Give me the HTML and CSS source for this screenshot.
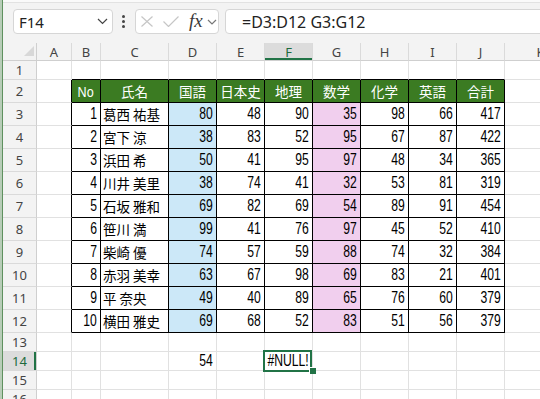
FILE: index.html
```html
<!DOCTYPE html>
<html lang="ja">
<head>
<meta charset="utf-8">
<link rel="stylesheet" href="styles.css">
</head>
<body>
<div class="app">
  <div class="topband"></div>
  <div class="fbar">
    <div class="box namebox"><span>F14</span><svg class="chev" width="11" height="7" viewBox="0 0 11 7"><path d="M1 1 L5.5 5.5 L10 1"/></svg></div>
    <div class="dots"><i></i><i></i><i></i></div>
    <div class="box fbtns">
      <svg class="xic" width="12" height="11" viewBox="0 0 12 11"><path d="M0.5 0.5 L11.5 10.5 M11.5 0.5 L0.5 10.5"/></svg>
      <svg class="ckic" width="16" height="11" viewBox="0 0 16 11"><path d="M0.5 5.5 L5.5 10.5 L15.5 0.5"/></svg>
      <span class="fx">fx</span>
      <svg class="chev2" width="10" height="6" viewBox="0 0 10 6"><path d="M1 1 L5 5 L9 1"/></svg>
    </div>
    <div class="box finput">=D3:D12 G3:G12</div>
  </div>
  <div class="sheet">
    <div class="row hdr">
      <div class="c ch corner"><i class="tri"></i></div>
      <div class="c ch">A</div><div class="c ch">B</div><div class="c ch">C</div><div class="c ch">D</div><div class="c ch">E</div><div class="c ch selc">F</div><div class="c ch">G</div><div class="c ch">H</div><div class="c ch">I</div><div class="c ch">J</div><div class="c ch">K</div>
    </div>
    <div class="row r19">
      <div class="c rh">1</div><div class="c"></div>
      <div class="c tt"></div><div class="c tt"></div><div class="c tt"></div><div class="c tt"></div><div class="c tt"></div><div class="c tt"></div><div class="c tt"></div><div class="c tt"></div><div class="c tt"></div>
      <div class="c"></div>
    </div>
    <div class="row r23">
      <div class="c rh">2</div><div class="c tl"></div>
      <div class="c t h"><span class="v">No</span></div><div class="c t h">氏名</div><div class="c t h">国語</div><div class="c t h">日本史</div><div class="c t h">地理</div><div class="c t h">数学</div><div class="c t h">化学</div><div class="c t h">英語</div><div class="c t h">合計</div>
      <div class="c"></div>
    </div>
    <div class="row r23">
      <div class="c rh">3</div><div class="c tl"></div>
      <div class="c t n"><span class="v">1</span></div><div class="c t s">葛西 祐基</div><div class="c t n b"><span class="v">80</span></div><div class="c t n"><span class="v">48</span></div><div class="c t n"><span class="v">90</span></div><div class="c t n p"><span class="v">35</span></div><div class="c t n"><span class="v">98</span></div><div class="c t n"><span class="v">66</span></div><div class="c t n"><span class="v">417</span></div>
      <div class="c"></div>
    </div>
    <div class="row r23">
      <div class="c rh">4</div><div class="c tl"></div>
      <div class="c t n"><span class="v">2</span></div><div class="c t s">宮下 涼</div><div class="c t n b"><span class="v">38</span></div><div class="c t n"><span class="v">83</span></div><div class="c t n"><span class="v">52</span></div><div class="c t n p"><span class="v">95</span></div><div class="c t n"><span class="v">67</span></div><div class="c t n"><span class="v">87</span></div><div class="c t n"><span class="v">422</span></div>
      <div class="c"></div>
    </div>
    <div class="row r23">
      <div class="c rh">5</div><div class="c tl"></div>
      <div class="c t n"><span class="v">3</span></div><div class="c t s">浜田 希</div><div class="c t n b"><span class="v">50</span></div><div class="c t n"><span class="v">41</span></div><div class="c t n"><span class="v">95</span></div><div class="c t n p"><span class="v">97</span></div><div class="c t n"><span class="v">48</span></div><div class="c t n"><span class="v">34</span></div><div class="c t n"><span class="v">365</span></div>
      <div class="c"></div>
    </div>
    <div class="row r23">
      <div class="c rh">6</div><div class="c tl"></div>
      <div class="c t n"><span class="v">4</span></div><div class="c t s">川井 美里</div><div class="c t n b"><span class="v">38</span></div><div class="c t n"><span class="v">74</span></div><div class="c t n"><span class="v">41</span></div><div class="c t n p"><span class="v">32</span></div><div class="c t n"><span class="v">53</span></div><div class="c t n"><span class="v">81</span></div><div class="c t n"><span class="v">319</span></div>
      <div class="c"></div>
    </div>
    <div class="row r23">
      <div class="c rh">7</div><div class="c tl"></div>
      <div class="c t n"><span class="v">5</span></div><div class="c t s">石坂 雅和</div><div class="c t n b"><span class="v">69</span></div><div class="c t n"><span class="v">82</span></div><div class="c t n"><span class="v">69</span></div><div class="c t n p"><span class="v">54</span></div><div class="c t n"><span class="v">89</span></div><div class="c t n"><span class="v">91</span></div><div class="c t n"><span class="v">454</span></div>
      <div class="c"></div>
    </div>
    <div class="row r23">
      <div class="c rh">8</div><div class="c tl"></div>
      <div class="c t n"><span class="v">6</span></div><div class="c t s">笹川 満</div><div class="c t n b"><span class="v">99</span></div><div class="c t n"><span class="v">41</span></div><div class="c t n"><span class="v">76</span></div><div class="c t n p"><span class="v">97</span></div><div class="c t n"><span class="v">45</span></div><div class="c t n"><span class="v">52</span></div><div class="c t n"><span class="v">410</span></div>
      <div class="c"></div>
    </div>
    <div class="row r23">
      <div class="c rh">9</div><div class="c tl"></div>
      <div class="c t n"><span class="v">7</span></div><div class="c t s">柴崎 優</div><div class="c t n b"><span class="v">74</span></div><div class="c t n"><span class="v">57</span></div><div class="c t n"><span class="v">59</span></div><div class="c t n p"><span class="v">88</span></div><div class="c t n"><span class="v">74</span></div><div class="c t n"><span class="v">32</span></div><div class="c t n"><span class="v">384</span></div>
      <div class="c"></div>
    </div>
    <div class="row r23">
      <div class="c rh">10</div><div class="c tl"></div>
      <div class="c t n"><span class="v">8</span></div><div class="c t s">赤羽 美幸</div><div class="c t n b"><span class="v">63</span></div><div class="c t n"><span class="v">67</span></div><div class="c t n"><span class="v">98</span></div><div class="c t n p"><span class="v">69</span></div><div class="c t n"><span class="v">83</span></div><div class="c t n"><span class="v">21</span></div><div class="c t n"><span class="v">401</span></div>
      <div class="c"></div>
    </div>
    <div class="row r23">
      <div class="c rh">11</div><div class="c tl"></div>
      <div class="c t n"><span class="v">9</span></div><div class="c t s">平 奈央</div><div class="c t n b"><span class="v">49</span></div><div class="c t n"><span class="v">40</span></div><div class="c t n"><span class="v">89</span></div><div class="c t n p"><span class="v">65</span></div><div class="c t n"><span class="v">76</span></div><div class="c t n"><span class="v">60</span></div><div class="c t n"><span class="v">379</span></div>
      <div class="c"></div>
    </div>
    <div class="row r23">
      <div class="c rh">12</div><div class="c tl"></div>
      <div class="c t n"><span class="v">10</span></div><div class="c t s">横田 雅史</div><div class="c t n b"><span class="v">69</span></div><div class="c t n"><span class="v">68</span></div><div class="c t n"><span class="v">52</span></div><div class="c t n p"><span class="v">83</span></div><div class="c t n"><span class="v">51</span></div><div class="c t n"><span class="v">56</span></div><div class="c t n"><span class="v">379</span></div>
      <div class="c"></div>
    </div>
    <div class="row r19">
      <div class="c rh">13</div><div class="c"></div><div class="c"></div><div class="c"></div><div class="c"></div><div class="c"></div><div class="c"></div><div class="c"></div><div class="c"></div><div class="c"></div><div class="c"></div><div class="c"></div>
    </div>
    <div class="row r19">
      <div class="c rh selr">14</div><div class="c"></div><div class="c"></div><div class="c"></div><div class="c n"><span class="v">54</span></div><div class="c"></div>
      <div class="c sel"><span class="v err">#NULL!</span><div class="selbox"></div><div class="handle"></div></div>
      <div class="c"></div><div class="c"></div><div class="c"></div><div class="c"></div><div class="c"></div>
    </div>
    <div class="row r19">
      <div class="c rh">15</div><div class="c"></div><div class="c"></div><div class="c"></div><div class="c"></div><div class="c"></div><div class="c"></div><div class="c"></div><div class="c"></div><div class="c"></div><div class="c"></div><div class="c"></div>
    </div>
    <div class="row r19">
      <div class="c rh">16</div><div class="c"></div><div class="c"></div><div class="c"></div><div class="c"></div><div class="c"></div><div class="c"></div><div class="c"></div><div class="c"></div><div class="c"></div><div class="c"></div><div class="c"></div>
    </div>
  </div>
</div>
</body>
</html>
```
FILE: styles.css
```css
* { box-sizing: border-box; }
html, body { margin: 0; padding: 0; }
body {
  width: 540px;
  height: 399px;
  overflow: hidden;
  background: #f3f3f3;
  font-family: "Liberation Sans", "Noto Sans CJK JP", sans-serif;
  color: #000;
}
.app {
  height: 399px;
  padding-left: 3px;
  overflow: hidden;
  background: linear-gradient(to right, #b8cdb8 0, #b8cdb8 2px, #5f915f 2px, #5f915f 3px, transparent 3px);
}
.topband {
  height: 3px;
  background: #fafafa;
  border-bottom: 1px solid #e2e2e2;
}
.fbar {
  height: 40px;
  display: flex;
  align-items: flex-start;
  padding: 6px 0 0 10px;
}
.box {
  height: 25px;
  background: #fff;
  border: 1px solid #d6d6d6;
  border-radius: 4px;
  display: flex;
  align-items: center;
}
.namebox {
  width: 100px;
  padding: 0 4px 0 5px;
  justify-content: space-between;
  font: 15px "Noto Sans", sans-serif;
  color: #222;
}
.chev path, .chev2 path {
  fill: none;
  stroke: #444;
  stroke-width: 1.2;
}
.chev2 path { stroke: #777; }
.dots {
  width: 4px;
  height: 25px;
  margin: 0 10px 0 8px;
  display: flex;
  flex-direction: column;
  justify-content: center;
  align-items: center;
  gap: 2px;
}
.dots i {
  width: 3px;
  height: 3px;
  border-radius: 50%;
  background: #444;
}
.fbtns {
  width: 84px;
  padding-left: 5px;
}
.xic path, .ckic path {
  fill: none;
  stroke: #c6c6c6;
  stroke-width: 1.2;
}
.ckic { margin-left: 10px; }
.fx {
  margin-left: 10px;
  font: italic 19px "Liberation Serif", serif;
  color: #3a3a3a;
  line-height: 1;
  margin-top: -2px;
}
.chev2 { margin-left: 4px; }
.finput {
  flex: 1;
  margin-left: 6px;
  margin-right: -10px;
  padding-left: 16px;
  font: 16px "Noto Sans", sans-serif;
  color: #222;
  border-top-right-radius: 0;
  border-bottom-right-radius: 0;
}

.sheet { background: #fff; }
.row {
  display: grid;
  grid-template-columns: 34px 35px 29px 68px repeat(7, 48px) 72px;
}
.hdr { height: 18px; background: #f3f3f3; }
.r19 { height: 19px; }
.r23 { height: 23px; }

.c {
  display: flex;
  align-items: center;
  overflow: hidden;
  white-space: nowrap;
  background: #fff;
  border-right: 1px solid #e1e1e1;
  border-bottom: 1px solid #e1e1e1;
}
.ch {
  background: #f3f3f3;
  border-right: 1px solid #dadada;
  border-bottom: 1px solid #cfcfcf;
  justify-content: center;
  font: 13px "Noto Sans", sans-serif;
  color: #444;
}
.corner {
  justify-content: flex-end;
  align-items: flex-end;
  padding: 0 2px 4px 0;
  border-right-color: #cfcfcf;
}
.tri {
  width: 0;
  height: 0;
  border-left: 10px solid transparent;
  border-bottom: 10px solid #d8d8d8;
}
.rh {
  background: #f3f3f3;
  border-right: 1px solid #cfcfcf;
  border-bottom: 1px solid #dadada;
  justify-content: center;
  font: 13px "Noto Sans", sans-serif;
  color: #444;
}
.selc {
  background: #dcdcdc;
  color: #1d6b3e;
  box-shadow: inset 0 -2px 0 #217346;
}
.selr {
  background: #dcdcdc;
  color: #1d6b3e;
  box-shadow: inset -2px 0 0 #217346;
}

.t { border-right-color: #000; border-bottom-color: #000; }
.tl { border-right-color: #000; }
.tt { border-bottom-color: #000; }

.h {
  background: #3b7b22;
  color: #fff;
  justify-content: center;
  font: 13.5px "Noto Sans CJK JP", sans-serif;
}
.h .v {
  font: 15px "Liberation Sans", sans-serif;
  transform-origin: 50% 50%;
  transform: scaleX(0.84);
}
.n {
  justify-content: flex-end;
  padding-right: 3px;
}
.v {
  display: inline-block;
  font: 16px "Liberation Sans", sans-serif;
  transform: scaleX(0.76);
  transform-origin: 100% 50%;
}
.s {
  padding-left: 2px;
  font: 13.5px "Noto Sans CJK JP", sans-serif;
}
.b { background: #cce8f8; }
.p { background: #f1cfee; }

.sel {
  position: relative;
  overflow: visible;
  justify-content: center;
}
.err { transform-origin: 50% 50%; }
.selbox {
  position: absolute;
  left: -2px;
  top: -2px;
  width: 49px;
  height: 22px;
  border: 2px solid #217346;
}
.handle {
  position: absolute;
  left: 44px;
  top: 15px;
  width: 7px;
  height: 7px;
  background: #217346;
  border-left: 1px solid #fff;
  border-top: 1px solid #fff;
}
```
